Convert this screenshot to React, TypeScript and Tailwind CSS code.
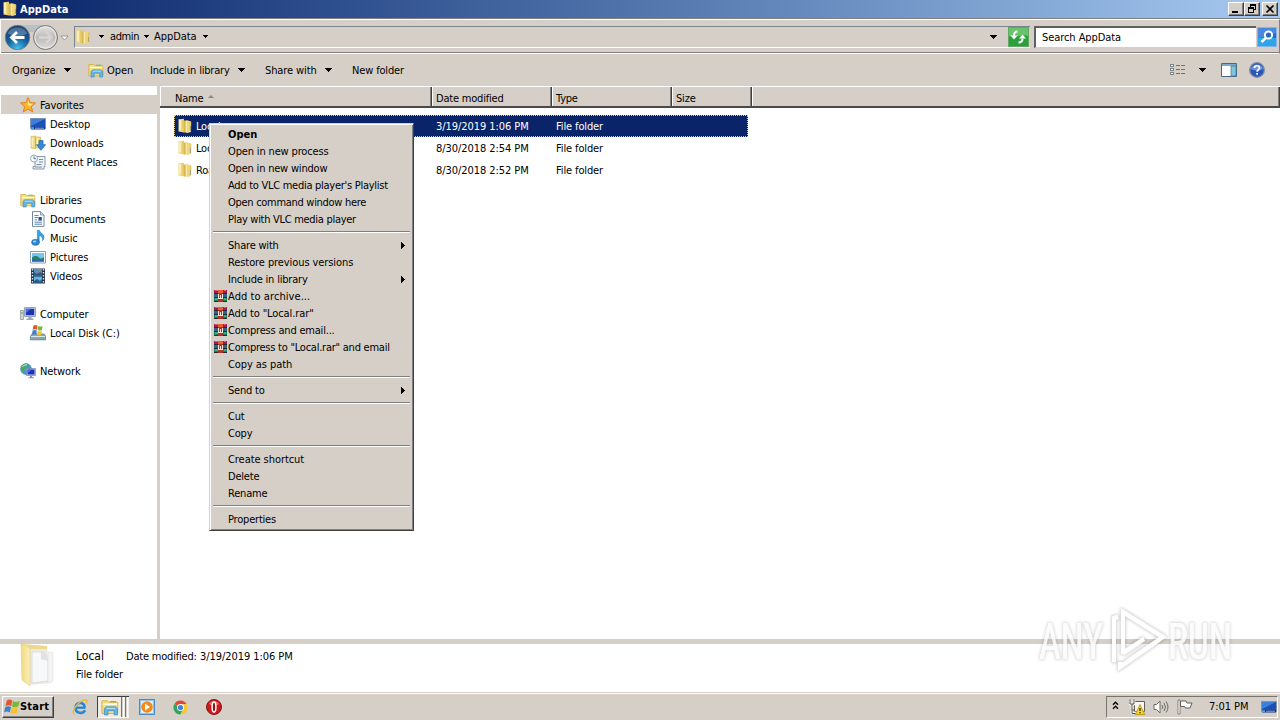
import React from 'react';

type IconProps = { className?: string };

const FolderIcon = ({ className = 'w-4 h-4' }: IconProps) => (
    <svg className={className} viewBox="0 0 16 16">
        <path d="M1.500 1.300 7 .8v13.600l-5.500-1z" fill="#f0d77c" />
        <path d="M3 2v10.500" stroke="#fdf5c8" strokeWidth="1.500" />
        <path d="M6 1v13" stroke="#dfc05c" strokeWidth=".9" />
        <path d="M6.500 2.500h3.500V14l-3 .8z" fill="#d9b94f" />
        <path d="M9.500 2 14 3.500v10.500L9.500 15.300z" fill="#efd678" />
        <path d="M9.300 3V14.500" stroke="#fbf0b4" strokeWidth="1.200" />
        <path d="M13.500 8v5" stroke="#a9a27c" strokeWidth="1.200" />
        <path d="M13.800 3.500v4.500" stroke="#d9b74e" strokeWidth=".8" />
    </svg>
);

const LibraryIcon = ({ className = 'w-4 h-4' }: IconProps) => (
    <svg className={className} viewBox="0 0 16 16">
        <path d="M.8 2.500h5l1 1.300h8v10H.8z" fill="#f5dd7c" stroke="#d3ae43" strokeWidth=".8" />
        <path d="M2 5.500h12.500" stroke="#fffbe0" strokeWidth="1.400" />
        <path d="M8 3.200h5.500" stroke="#6fb36a" strokeWidth=".9" />
        <path d="M3 15V9.500l1.600-1.700h8.300l1.800 1.700V15h-3v-3.700H6.200V15z" fill="#62b5e4" stroke="#3b88bd" strokeWidth=".6" />
        <path d="M4.800 9.200h8" stroke="#bfe7fa" strokeWidth=".9" />
    </svg>
);

const StarIcon = ({ className = 'w-4 h-4' }: IconProps) => (
    <svg className={className} viewBox="0 0 16 16">
        <path d="m8 .6 2.100 4.900 5.400.5-4.100 3.500 1.300 5.400L8 12.100l-4.700 2.800 1.300-5.400L.5 6l5.400-.5z" fill="#fbb62c" stroke="#df7814" strokeWidth=".9" />
        <path d="M8 3 9.300 6.600 13 7l-3 2.200L8 8z" fill="#ffe88a" />
    </svg>
);

const DesktopIcon = ({ className = 'w-4 h-4' }: IconProps) => (
    <svg className={className} viewBox="0 0 16 16">
        <path d="M.5 2.500h15v10H.5z" fill="#1d50b4" stroke="#7993bb" />
        <path d="M1 3h14L1 10z" fill="#3f7fdc" />
        <path d="M1 11h14v2.500H1z" fill="#16307c" />
        <path d="M1 11.200h3v2H1z" fill="#46a7e4" />
        <path d="M5 12.200h9" stroke="#8eb1df" />
    </svg>
);

const DownloadIcon = () => (
    <svg className="w-4 h-4" viewBox="0 0 16 16">
        <path d="M1 1.500 5.500 1v13L1 13zM5.500 2h5v11h-5z" fill="#f2db82" stroke="#cda843" strokeWidth=".6" />
        <path d="M2.200 2.500v9.500M7.500 3v9" stroke="#fff7ce" strokeWidth="1.100" />
        <path d="M9 5.500h4v4.200h2.500L11 15.300 6.500 9.700H9z" fill="#2f8cdb" stroke="#1b61a8" strokeWidth=".7" />
    </svg>
);

const RecentIcon = () => (
    <svg className="w-4 h-4" viewBox="0 0 16 16">
        <path d="M5 2.500h10v10h-1v2.500H3v-2.500h2z" fill="#eef3f7" stroke="#7c8fa1" strokeWidth=".9" />
        <path d="M9 5.500h4M9 8h4M6.500 10.500h5M5 13h7" stroke="#6b8296" strokeWidth=".9" />
        <circle cx="4" cy="4.500" r="3.500" fill="#f9fcfe" stroke="#8a9fb2" strokeWidth=".9" />
        <path d="M4 2.300v2.400h2" stroke="#3f6689" strokeWidth=".9" fill="none" />
    </svg>
);

const DocumentIcon = () => (
    <svg className="w-4 h-4" viewBox="0 0 16 16">
        <path d="M2.500.6h8L14 4v11.400H2.500z" fill="#fdfeff" stroke="#7189a5" />
        <path d="M10.500.8V4H14" fill="#cfdae6" stroke="#7189a5" strokeWidth=".8" />
        <path d="M4.500 4.500h4M4.500 6.500h3.500M4.500 11.200H12M4.500 13.200H12" stroke="#5877a4" strokeWidth=".9" />
        <path d="M8.500 6h3.300v3.600H8.500z" fill="#1d4e91" />
        <path d="M4.500 8.800H7" stroke="#5877a4" strokeWidth=".9" />
    </svg>
);

const MusicIcon = () => (
    <svg className="w-4 h-4" viewBox="0 0 16 16">
        <path d="M7.400 0h1.800c.2 3 4.800 3.400 4.800 7.400 0 1.500-.6 2.500-1.400 3.300.5-3.700-1.600-4.800-3.400-5v6.600H7.400z" fill="#3aa0e0" stroke="#1f6fb4" strokeWidth=".5" />
        <ellipse cx="5.500" cy="12.300" rx="4" ry="3.100" fill="#2a87d0" stroke="#1c62a2" strokeWidth=".5" />
        <ellipse cx="4.600" cy="11.400" rx="1.700" ry="1" fill="#9ad6f6" />
    </svg>
);

const PictureIcon = () => (
    <svg className="w-4 h-4" viewBox="0 0 16 16">
        <path d="M.5 2.500h15v11.500H.5z" fill="#fff" stroke="#8ba0b5" />
        <path d="M2 4h12v8.500H2z" fill="#75c5ec" />
        <path d="M2 8.400c3-2 5-1.800 7 .1s3.500.3 5-.6v4.600H2z" fill="#2b7e68" />
        <path d="M2 11h12v1.500H2z" fill="#2d65a8" />
    </svg>
);

const VideoIcon = () => (
    <svg className="w-4 h-4" viewBox="0 0 16 16">
        <path d="M1 .5h14v15H1z" fill="#26344a" />
        <path d="M4 1h8v6.500H4z" fill="#4b95c9" />
        <path d="M4 8.500h8V15H4z" fill="#62b5e0" />
        <path d="m4 4 3 2 3-3 2 3v1.500H4zM4 13l3-2 3 2 2-2v4H4z" fill="#2a5c8d" />
        <path d="M8 2.500h2.500v2H8z" fill="#bd7850" />
        <path d="M2.500 1v14M13.500 1v14" stroke="#dbe5ef" strokeWidth="1.400" strokeDasharray="1.500 1.500" />
    </svg>
);

const ComputerIcon = () => (
    <svg className="w-4 h-4" viewBox="0 0 16 16">
        <path d="M.6 4.500h2.800v9H.6z" fill="#d7ddd4" stroke="#7a8b80" strokeWidth=".7" />
        <path d="M2 6v2" stroke="#5b9c48" />
        <path d="M4.500 1.500h11v9h-11z" fill="#c9d1e0" stroke="#8491ae" strokeWidth=".8" />
        <path d="M5.800 2.800h8.400v6.400H5.800z" fill="#1c33b5" />
        <path d="M5.800 2.800H11L5.800 7z" fill="#4b73e2" />
        <path d="M8.500 11h3v1.500h2v1.400h-7v-1.400h2z" fill="#99a5bd" />
    </svg>
);

const WindowsFlag = ({ className = 'w-4 h-4' }: IconProps) => (
    <svg className={`shrink-0 ${className}`} viewBox="0 0 16 16">
        <path d="M2.800 1.500c2-1.300 3.700-1.100 5.500 0L7.200 7C5.300 6 3.500 6 1.500 7.100z" fill="#e8552d" />
        <path d="M9 2c2 1.200 4.200 1.200 6.700 0l-1.300 5.300c-2 1.300-4.300 1.200-6.400.1z" fill="#76b83a" />
        <path d="M1.300 8c2-1.200 3.800-1.100 5.700 0l-1.200 5.500c-1.900-1.200-3.700-1.200-5.700 0z" fill="#3b81cf" />
        <path d="M7.800 8.300c2 1.200 4.100 1.200 6.400 0l-1.300 5.500c-2.100 1.200-4.300 1.200-6.300 0z" fill="#f7c22d" />
    </svg>
);

const DiskIcon = () => (
    <svg className="w-4 h-4" viewBox="0 0 16 16">
        <path d="M2 9h12l1.700 2.500v3.300H.4v-3.300z" fill="#8da5b4" stroke="#5f7685" strokeWidth=".8" />
        <path d="M1 11.500h14" stroke="#dbe8ef" />
        <path d="M11 13.400h3" stroke="#42d05a" strokeWidth="1.200" />
        <path d="M3.300.8C5-.2 6 0 7.500.7L7 4.700C5.500 3.900 4.300 4 2.700 4.700z" fill="#e8552d" />
        <path d="M8.200 1c1.500.8 2.800.8 4.300 0L12 5c-1.500.8-2.800.7-4.200 0z" fill="#76b83a" />
        <path d="M2.600 5.500c1.500-.7 2.900-.7 4.200 0l-.5 4c-1.400-.8-2.700-.8-4.300 0z" fill="#3b81cf" />
        <path d="M7.600 5.700c1.500.8 2.800.8 4.300 0l-.6 4c-1.500.8-2.800.7-4.200 0z" fill="#f7c22d" />
    </svg>
);

const NetworkIcon = () => (
    <svg className="w-4 h-4" viewBox="0 0 16 16">
        <circle cx="6" cy="6" r="5.400" fill="#3f9bd0" stroke="#2878a0" strokeWidth=".6" />
        <path d="M2 3c2-2 5-2.500 6-1.200C7 3 6 3.500 6.500 5 4 6 3.500 8 3.500 10 1 8.500 0 6 2 3z" fill="#51a85a" />
        <path d="M2.500 3.500C4 2 6 1.500 7 2" stroke="#c8f1ee" fill="none" />
        <path d="M6.500 5.500h9v7h-9z" fill="#c9d1e8" stroke="#6f80b4" strokeWidth=".7" />
        <path d="M7.500 6.500h7v5h-7z" fill="#1932b8" />
        <path d="M7.500 6.500H12l-4.500 3.800z" fill="#4671e2" />
        <path d="M10 13h2v1.300h2v1H8.500v-1H10z" fill="#8490ac" />
    </svg>
);

const RarIcon = () => (
    <svg className="w-[13px] h-[12px] mb-px" viewBox="0 0 13 12" shapeRendering="crispEdges">
        <path d="M0 0h13v4H0z" fill="#a01c4c" />
        <path d="M0 4h13v4H0z" fill="#2f6488" />
        <path d="M0 8h13v4H0z" fill="#18805a" />
        <path d="M1 0h3v1H1zM10 0h2v1h-2z" fill="#e06070" />
        <path d="M0 3h13v1H0zM0 7h13v1H0zM0 11h13v1H0z" fill="#232a33" />
        <path d="M1 8h3v2H1zM10 8h2v2h-2z" fill="#35b37d" />
        <path d="M4 0h5v12H4z" fill="#a8342b" />
        <path d="M4 0h5v3H4z" fill="#f05a32" />
        <path d="M4 4h1v4H4zM6 5h1v3H6zM8 4h1v4H8zM4 8h5v1H4z" fill="#f3e6d8" />
    </svg>
);

const Down = ({ className = '' }: IconProps) => (
    <svg className={`shrink-0 ${className}`} width="7" height="4" viewBox="0 0 7 4" shapeRendering="crispEdges">
        <path d="M0 0h7L3.500 4z" fill="#000" />
    </svg>
);

const SmallDown = ({ className = '' }: IconProps) => (
    <svg className={`shrink-0 ${className}`} width="5" height="3" viewBox="0 0 5 3" shapeRendering="crispEdges">
        <path d="M0 0h5L2.500 3z" fill="#000" />
    </svg>
);

const navItems = [
    { label: 'Favorites', icon: <StarIcon />, root: true, selected: true },
    { label: 'Desktop', icon: <DesktopIcon /> },
    { label: 'Downloads', icon: <DownloadIcon /> },
    { label: 'Recent Places', icon: <RecentIcon /> },
    null,
    { label: 'Libraries', icon: <LibraryIcon />, root: true },
    { label: 'Documents', icon: <DocumentIcon /> },
    { label: 'Music', icon: <MusicIcon /> },
    { label: 'Pictures', icon: <PictureIcon /> },
    { label: 'Videos', icon: <VideoIcon /> },
    null,
    { label: 'Computer', icon: <ComputerIcon />, root: true },
    { label: 'Local Disk (C:)', icon: <DiskIcon /> },
    null,
    { label: 'Network', icon: <NetworkIcon />, root: true },
];

const files = [
    { name: 'Local', date: '3/19/2019 1:06 PM', selected: true },
    { name: 'LocalLow', date: '8/30/2018 2:54 PM' },
    { name: 'Roaming', date: '8/30/2018 2:52 PM' },
];

type MenuItem = { label: string; bold?: boolean; sub?: boolean; rar?: boolean; tracking?: string };

const menu: (MenuItem | null)[] = [
    { label: 'Open', bold: true },
    { label: 'Open in new process', tracking: 'tracking-[-0.15px]' },
    { label: 'Open in new window' },
    { label: "Add to VLC media player's Playlist", tracking: 'tracking-[-0.27px]' },
    { label: 'Open command window here', tracking: 'tracking-[-0.29px]' },
    { label: 'Play with VLC media player', tracking: 'tracking-[-0.29px]' },
    null,
    { label: 'Share with', sub: true },
    { label: 'Restore previous versions', tracking: 'tracking-[-0.09px]' },
    { label: 'Include in library', sub: true },
    { label: 'Add to archive...', rar: true, tracking: 'tracking-[0.07px]' },
    { label: 'Add to "Local.rar"', rar: true, tracking: 'tracking-[-0.1px]' },
    { label: 'Compress and email...', rar: true },
    { label: 'Compress to "Local.rar" and email', rar: true, tracking: 'tracking-[-0.24px]' },
    { label: 'Copy as path', tracking: 'tracking-[-0.08px]' },
    null,
    { label: 'Send to', sub: true },
    null,
    { label: 'Cut' },
    { label: 'Copy' },
    null,
    { label: 'Create shortcut', tracking: 'tracking-[-0.06px]' },
    { label: 'Delete' },
    { label: 'Rename' },
    null,
    { label: 'Properties' },
];

function TitleBar() {
    const button = 'w-4 h-[14px] bg-[#d5cfc7] border border-t-white border-l-white border-r-[#404040] border-b-[#404040] shadow-[inset_-1px_-1px_0_#808080]';
    return (
        <div className="h-[18px] flex items-center bg-linear-to-r from-[#0a246a] to-[#a6caf0] pl-[2px] pr-[2px]">
            <FolderIcon />
            <span className="ml-[2px] pt-px flex-1 text-white font-bold tracking-[0.05px]">AppData</span>
            <div className={button}>
                <svg width="14" height="12" shapeRendering="crispEdges"><path d="M3 8h6v2H3z" /></svg>
            </div>
            <div className={button}>
                <svg width="14" height="12" shapeRendering="crispEdges">
                    <path d="M5 1h6v6H9V6h1V3H6v1H5zM3 4h6v6H3zM4 6v3h4V6z" fillRule="evenodd" />
                </svg>
            </div>
            <div className={`${button} ml-[2px]`}>
                <svg width="14" height="12"><path d="m3.500 2.500 7 7m0-7-7 7" stroke="#000" strokeWidth="1.700" /></svg>
            </div>
        </div>
    );
}

function AddressBar() {
    return (
        <div className="h-[36px] border-t border-[#808080] bg-[#d5cfc7]">
            <div className="h-[35px] flex items-center border-t border-l border-b border-white border-r border-r-[#808080] shadow-[inset_0_-1px_0_#808080] pl-[3px] pr-[2px]">
                <svg className="shrink-0" width="66" height="28" viewBox="0 0 66 28">
                    <defs>
                        <radialGradient id="back" cx=".5" cy=".95" r=".8">
                            <stop offset="0" stopColor="#42c3f2" />
                            <stop offset=".55" stopColor="#16649f" />
                            <stop offset="1" stopColor="#123f75" />
                        </radialGradient>
                        <linearGradient id="forward" x1="0" y1="0" x2="0" y2="1">
                            <stop offset="0" stopColor="#e4e3e1" />
                            <stop offset=".5" stopColor="#bcbbb9" />
                            <stop offset="1" stopColor="#dddcda" />
                        </linearGradient>
                    </defs>
                    <path d="M13 2h28v5c-6-2-8 2-14 2S19 5 13 7z" fill="#b9bfc4" />
                    <circle cx="13.500" cy="14.500" r="12.200" fill="url(#back)" stroke="#6a7e92" strokeWidth=".9" />
                    <path d="M3.500 10.500C6.500 2.500 20.500 2.500 23.500 10.500c-6 3-14 3-20 0z" fill="#fff" opacity=".25" />
                    <path d="M20.500 14.500H8.500M13 9l-5.500 5.500L13 20" stroke="#fff" strokeWidth="2.800" fill="none" />
                    <circle cx="41.500" cy="14.500" r="12" fill="url(#forward)" stroke="#77777a" />
                    <circle cx="41.500" cy="14.500" r="10.600" fill="none" stroke="#eeeeec" strokeWidth=".9" />
                    <path d="M35 14.500h12M42 9l5.500 5.500L42 20" stroke="#d6d5d3" strokeWidth="2.300" fill="none" />
                    <path d="M57 13h7l-3.500 4z" fill="#fff" stroke="#88867f" strokeWidth=".8" />
                </svg>
                <div className="ml-[4px] h-[22px] flex-1 flex items-center border-t border-l border-[#77848c] border-b border-b-white">
                    <FolderIcon className="w-4 h-4" />
                    <SmallDown className="ml-[8px]" />
                    <span className="ml-[6px] w-[28px] tracking-[-0.4px]">admin</span>
                    <SmallDown className="ml-[6px]" />
                    <span className="ml-[5px] w-[43px] tracking-[-0.05px]">AppData</span>
                    <SmallDown className="ml-[6px]" />
                    <Down className="ml-auto mr-[11px] mt-px" />
                    <svg className="shrink-0" width="21" height="20" viewBox="0 0 21 20">
                        <rect x=".5" y=".5" width="20" height="19" fill="#2d9f3c" stroke="#60aa63" />
                        <path d="M1 1h19v8C13 6 8 12 1 9z" fill="#69c36a" />
                        <path d="M9.500 4.500C6.500 4.500 6 6 6 9" fill="none" stroke="#fff" strokeWidth="2" />
                        <path d="M2.500 8.500h7L6 12.500z" fill="#fff" />
                        <path d="M10.500 15.500c3 0 4-1 4-4" fill="none" stroke="#fff" strokeWidth="2" />
                        <path d="M11 11.500h7l-3.500-4z" fill="#fff" />
                    </svg>
                    <div className="w-px" />
                </div>
                <div className="ml-[4px] w-[222px] h-[22px] bg-white border-t-2 border-l-2 border-[#606060] border-b border-b-[#d5cfc7] flex items-center pl-[6px] pt-px tracking-[-0.07px]">
                    Search AppData
                </div>
                <svg className="ml-[1px] shrink-0" width="20" height="20" viewBox="0 0 20 20">
                    <rect x=".5" y=".5" width="19" height="19" fill="#2469cb" stroke="#87b2e6" />
                    <path d="M1 11h18v8H1z" fill="#2ba7e9" />
                    <path d="M1 1h18v5C12 8 9 11 1 11z" fill="#4a88dd" />
                    <circle cx="11.500" cy="8" r="3.600" fill="#226ac5" stroke="#fff" strokeWidth="2" />
                    <path d="m8.700 11-4.200 4" stroke="#fff" strokeWidth="2.500" />
                </svg>
            </div>
        </div>
    );
}

function CommandBar() {
    return (
        <div className="h-[32px] flex items-center pl-[12px] pr-[15px]">
            <span className="w-[52px] pt-[2px] tracking-[-0.1px]">Organize</span>
            <Down />
            <LibraryIcon className="w-4 h-4 ml-[17px]" />
            <span className="ml-[3px] w-[43px] pt-[2px] tracking-[-0.05px]">Open</span>
            <span className="w-[88px] pt-[2px]">Include in library</span>
            <Down />
            <span className="ml-[20px] w-[60px] pt-[2px] tracking-[-0.1px]">Share with</span>
            <Down />
            <span className="ml-[20px] pt-[2px] tracking-[-0.15px]">New folder</span>
            <svg className="ml-auto" width="16" height="14" viewBox="0 0 16 14" shapeRendering="crispEdges">
                <path d="M.5 1.500h3v2h-3zM.5 5.500h3v2h-3zM.5 9.500h3v2h-3z" fill="#fff" stroke="#7b8588" />
                <path d="M6 2.500h4m1 0h4M6 6.500h4m1 0h4M6 10.500h4m1 0h4" stroke="#68747c" />
            </svg>
            <Down className="ml-[13px]" />
            <svg className="ml-[15px]" width="16" height="14" viewBox="0 0 16 14">
                <path d="M.5.500h15v13H.500z" fill="#fff" stroke="#456987" />
                <path d="M1 1h14v2H1z" fill="#7da9c6" />
                <path d="M10 3h5v10h-5z" fill="#7fc3dc" stroke="#49768d" strokeWidth=".7" />
            </svg>
            <svg className="ml-[12px]" width="16" height="16" viewBox="0 0 16 16">
                <circle cx="8" cy="8" r="7.300" fill="#2b55b8" stroke="#7e8ca8" strokeWidth="1.300" />
                <path d="M2 7c1-6 11-6 12 0-4 2-8 2-12 0z" fill="#6b93df" />
                <path d="M5.500 6c0-3 5-3 5 0 0 1.800-2.400 1.700-2.400 3.700M8.100 11v1.700" fill="none" stroke="#fff" strokeWidth="1.700" />
            </svg>
        </div>
    );
}

function NavPane() {
    return (
        <div className="w-[157px] shrink-0 pt-[9px]">
            {navItems.map((item, i) =>
                item ? (
                    <div key={i} className={`h-[19px] ml-px flex items-center ${item.root ? 'pl-[19px]' : 'pl-[29px]'} ${item.selected ? 'bg-[#d5cfc7]' : ''}`}>
                        {item.icon}
                        <span className="ml-[4px] pt-[2px] tracking-[-0.1px]">{item.label}</span>
                    </div>
                ) : (
                    <div key={i} className="h-[19px]" />
                )
            )}
        </div>
    );
}

function FileList() {
    const head = 'h-full flex items-center pt-[4px] pl-[4px] border-r border-[#404040] shadow-[inset_-1px_0_0_#808080,inset_1px_0_0_#fff]';
    return (
        <div className="flex-1">
            <div className="h-[22px] flex bg-[#d5cfc7] border-t border-t-white border-b-2 border-b-[#4b4a48]">
                <div className={`${head} w-[272px] pl-[15px]`}>
                    Name
                    <svg className="ml-[5px] mb-[4px]" width="6" height="3"><path d="M3 0 6 3H0z" fill="#8c8983" /></svg>
                </div>
                <div className={`${head} w-[120px]`}>Date modified</div>
                <div className={`${head} w-[120px]`}>Type</div>
                <div className={`${head} w-[80px]`}>Size</div>
                <div className={`${head} flex-1`} />
            </div>
            <div className="pt-[7px] pl-[14px]">
                {files.map((file) => (
                    <div
                        key={file.name}
                        className={`w-[574px] h-[22px] flex items-center pl-[2px] border border-dotted ${file.selected ? 'bg-[#0a246a] text-white border-[#d6c88e]' : 'border-transparent'}`}
                    >
                        <FolderIcon />
                        <span className="ml-[3px] w-[240px] pt-px">{file.name}</span>
                        <span className="w-[120px] pt-px tracking-[-0.06px]">{file.date}</span>
                        <span className="pt-px tracking-[-0.12px]">File folder</span>
                    </div>
                ))}
            </div>
        </div>
    );
}

function ContextMenu() {
    return (
        <div className="absolute left-[209px] top-[123px] w-[205px] h-[408px] bg-[#d5cfc7] border border-t-[#d5cfc7] border-l-[#d5cfc7] border-r-[#404040] border-b-[#404040] shadow-[inset_1px_1px_0_#fff,inset_-1px_-1px_0_#808080] pt-[2px] px-[2px]">
            {menu.map((item, i) =>
                item ? (
                    <div key={i} className="h-[17px] flex items-center pr-[6px]">
                        <div className="w-[16px] shrink-0 pl-[2px]">{item.rar && <RarIcon />}</div>
                        <span className={`flex-1 whitespace-nowrap ${item.bold ? 'font-bold tracking-[0px]' : item.tracking ?? ''}`}>{item.label}</span>
                        {item.sub && (
                            <svg className="mb-px" width="4" height="7" shapeRendering="crispEdges"><path d="M0 0v7l4-3.500z" /></svg>
                        )}
                    </div>
                ) : (
                    <div key={i} className="h-[9px] pt-[3px] px-px">
                        <div className="h-[2px] bg-[#808080] border-b border-white" />
                    </div>
                )
            )}
        </div>
    );
}

function Details() {
    return (
        <div className="h-[48px] flex bg-white">
            <svg className="ml-[20px] -mt-[2px]" width="36" height="46" viewBox="0 0 36 46">
                <defs>
                    <linearGradient id="cover" x1="0" x2="1">
                        <stop offset="0" stopColor="#f0d983" />
                        <stop offset="1" stopColor="#fbf0b4" />
                    </linearGradient>
                </defs>
                <path d="M3 2 27 4v8H9z" fill="#ecd98f" />
                <path d="M9 7h18l5 34-22 2z" fill="#ece9e2" />
                <path d="M12 10h10l6 9v20l-16 2z" fill="#f7f8fa" stroke="#d6d8db" strokeWidth=".8" />
                <path d="M21 9v8l7 2c0-5-3-9-7-10z" fill="#dfe1e4" />
                <path d="M28 10h5v29l-5 2z" fill="#f3f3f4" stroke="#dddee0" strokeWidth=".5" />
                <path d="M1 1 10 6v38L2 38z" fill="url(#cover)" stroke="#e5cb75" strokeWidth=".6" />
            </svg>
            <div className="ml-[20px] pt-[3px]">
                <div className="h-[18px] flex items-center">
                    <span className="w-[50px] text-[12px] tracking-[0px]">Local</span>
                    <span className="w-[74px] pt-px">Date modified:</span>
                    <span className="pt-px tracking-[-0.06px]">3/19/2019 1:06 PM</span>
                </div>
                <div className="h-[18px] flex items-center pt-px tracking-[-0.12px]">File folder</div>
            </div>
        </div>
    );
}

function Taskbar() {
    return (
        <div className="h-[28px] flex items-center bg-[#d5cfc7] border-t border-[#d5cfc7] shadow-[inset_0_1px_0_#fff] pb-px pt-[2px] pl-[2px] pr-[2px]">
            <div className="w-[52px] h-[22px] flex items-center border border-t-white border-l-white border-r-[#404040] border-b-[#404040] shadow-[inset_-1px_-1px_0_#808080] pl-px font-bold tracking-[0.2px]">
                <WindowsFlag />
                Start
            </div>
            <svg className="ml-[18px]" width="16" height="16" viewBox="0 0 16 16">
                <path d="M13.500 8.700H4" fill="none" stroke="#1e83d6" strokeWidth="2.200" />
                <path d="M13 11.300C11 15.500 3.200 14.500 3.500 8.500 3.800 2.500 12.500 2.300 12.600 8.300" fill="none" stroke="#2389dc" strokeWidth="2.600" />
                <path d="M2.500 15C-2.500 13 8.500-.5 14.600 1.200c1 .5.2 2.300-.4 3.300" fill="none" stroke="#edb83b" strokeWidth="1.400" />
            </svg>
            <div className="ml-[9px] w-[32px] h-[22px] flex items-center border-t border-l border-[#404040] pl-[3px] bg-[#efece7] border-b border-b-white">
                <LibraryIcon className="w-[18px] h-[18px] shrink-0" />
                <div className="ml-[2px] w-[3px] shrink-0 h-full border-l border-[#77736d] border-r border-r-white bg-[#d5cfc7]" />
                <div className="ml-px w-[3px] shrink-0 h-full border-l border-[#77736d] border-r border-r-white bg-[#d5cfc7]" />
            </div>
            <svg className="ml-[10px]" width="16" height="16" viewBox="0 0 16 16">
                <rect x=".5" y=".5" width="15" height="15" fill="#90c5ef" stroke="#468bc5" />
                <rect x="2" y="2" width="12" height="12" fill="#dceffb" />
                <circle cx="8" cy="8" r="5.800" fill="#f48b18" />
                <path d="m6 4.500 5 3.500-5 3.500z" fill="#fff" />
            </svg>
            <svg className="ml-[18px]" width="15" height="15" viewBox="0 0 16 16">
                <path d="M8 8 1.500 4.200A7.500 7.500 0 0 1 14.500 4.300z" fill="#dc4939" />
                <path d="M8 8 1.500 4.200A7.500 7.500 0 0 0 8 15.500l3.300-5.700z" fill="#37a35a" />
                <path d="M8 4.300h6.500A7.500 7.500 0 0 1 8 15.500L11.300 8z" fill="#f5c936" />
                <circle cx="8" cy="8" r="3.700" fill="#fff" />
                <circle cx="8" cy="8" r="2.800" fill="#4285d8" />
            </svg>
            <svg className="ml-[18px]" width="16" height="16" viewBox="0 0 16 16">
                <circle cx="8" cy="8" r="7.500" fill="#c91a20" stroke="#8e1218" />
                <path d="M3 5c2-4 8-4 10 0-3 2-7 2-10 0z" fill="#e9696a" />
                <ellipse cx="8" cy="8" rx="1.900" ry="5" fill="#9a1218" stroke="#fff" strokeWidth="1.500" />
            </svg>
            <div className="ml-auto w-[172px] h-[22px] flex items-center border-t border-l border-[#77736d] border-b border-b-white border-r border-r-white pl-[5px]">
                <svg className="shrink-0 mb-[3px]" width="7" height="9" viewBox="0 0 7 9">
                    <path d="M1 3.800 3.500 1.300 6 3.800M1 7.800l2.500-2.500L6 7.800" stroke="#000" strokeWidth="1.400" fill="none" />
                </svg>
                <svg className="ml-[10px] shrink-0" width="16" height="16" viewBox="0 0 16 16">
                    <path d="M5.500 2.500h10v10h-10z" fill="#f6f5f1" stroke="#625f59" />
                    <path d="M1 1v4h4V1M3 5v9h5" fill="none" stroke="#fff" strokeWidth="2.500" />
                    <path d="M1 .5V5h4V.5M3 5v9.500h5M3 11h3" fill="none" stroke="#55524d" />
                    <path d="m11 5.500 4.700 10H6.300z" fill="#fbd719" stroke="#a68600" strokeWidth=".7" />
                    <path d="M11 9v3m0 1v1.300" stroke="#302909" strokeWidth="1.300" />
                </svg>
                <svg className="ml-[8px] shrink-0" width="16" height="16" viewBox="0 0 16 16" fill="none" stroke="#6d6a65">
                    <path d="M1 5.500h2.500L7 2v12l-3.500-3.500H1z" fill="#fff" />
                    <path d="M9 6q1.500 2 0 4M11 4q3 4 0 8M13 2.500q4 5.500 0 11" />
                </svg>
                <svg className="ml-[8px] shrink-0" width="16" height="16" viewBox="0 0 16 16">
                    <path d="M1 1h2v14H1z" fill="#fff" stroke="#625f59" strokeWidth=".7" />
                    <path d="M3.500 2H9l1 2h5l-2 5H8.500l-1-1.500h-4z" fill="#fff" stroke="#625f59" />
                </svg>
                <span className="ml-[16px] w-[52px] shrink-0 whitespace-nowrap tracking-[-0.05px]">7:01 PM</span>
                <DesktopIcon className="w-4 h-4 shrink-0" />
            </div>
        </div>
    );
}

function Watermark() {
    const word = { fontFamily: 'Roboto', fontSize: 50, fontWeight: 400, lengthAdjust: 'spacingAndGlyphs' };
    return (
        <svg className="absolute left-[1030px] top-[590px]" width="240" height="100" viewBox="0 -10 240 100">
            <defs>
                <filter id="halo" x="-10%" y="-20%" width="120%" height="140%">
                    <feMorphology in="SourceAlpha" operator="dilate" radius="1.2" />
                    <feGaussianBlur stdDeviation="1.7" />
                    <feComponentTransfer result="soft"><feFuncA type="linear" slope=".18" /></feComponentTransfer>
                    <feMerge>
                        <feMergeNode in="soft" />
                        <feMergeNode in="SourceGraphic" />
                    </feMerge>
                </filter>
            </defs>
            <g fill="#fff" fillOpacity=".8" filter="url(#halo)">
                <text x="9" y="59" textLength="64" {...word}>ANY</text>
                <text x="138" y="59" textLength="64" {...word}>RUN</text>
                <path d="M84 62V18l4-1M93 54V12l40 25-43 30v-5M93 53l21-14" fill="none" stroke="#fff" strokeWidth="4" />
            </g>
        </svg>
    );
}

export default function App() {
    return (
        <div className="relative w-[1280px] h-[720px] overflow-hidden flex flex-col bg-[#d5cfc7] text-black text-[11px] leading-[14px] tracking-[-0.2px] font-['DejaVu_Sans_Condensed','DejaVu_Sans',sans-serif] [font-stretch:condensed] select-none">
            <TitleBar />
            <AddressBar />
            <CommandBar />
            <div className="h-[553px] flex bg-white">
                <NavPane />
                <div className="w-[3px] bg-[#d5cfc7]" />
                <FileList />
            </div>
            <div className="h-[5px] bg-[#d5cfc7]" />
            <Details />
            <Taskbar />
            <ContextMenu />
            <Watermark />
        </div>
    );
}
